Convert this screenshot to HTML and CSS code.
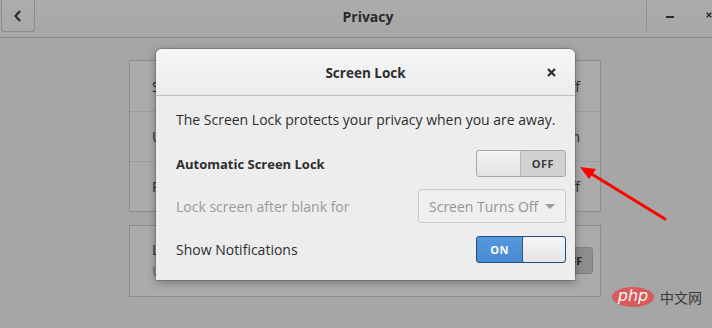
FILE: index.html
```html
<!DOCTYPE html>
<html>
<head>
<meta charset="utf-8">
<link rel="stylesheet" href="styles.css">
</head>
<body>
<div class="window">
  <header class="headerbar">
    <div class="back-btn">
      <svg width="10" height="12" viewBox="0 0 10 12"><path d="M7 1 L2.5 6 L7 11" fill="none" stroke="#2b2b2b" stroke-width="2.2"/></svg>
    </div>
    <div class="hb-title">Privacy</div>
    <div class="hb-controls">
      <span class="hb-sep"></span>
      <span class="hb-min"></span>
      <span class="hb-close">
        <svg width="8" height="8" viewBox="0 0 8 8"><path d="M1 1 L7 7 M7 1 L1 7" stroke="#2b2b2b" stroke-width="2"/></svg>
      </span>
    </div>
  </header>

  <main class="content">
    <section class="panel">
      <div class="prow"><span>Screen Lock</span><span>Off</span></div>
      <div class="prow"><span>Usage &amp; History</span><span>On</span></div>
      <div class="prow"><span>Purge Trash &amp; Temporary Files</span><span>Off</span></div>
    </section>
    <section class="panel panel-two">
      <div class="prow2">
        <div class="p2-text">
          <div>Location Services</div>
          <div class="p2-sub">Uses GPS and Wi-Fi</div>
        </div>
        <div class="bg-switch"><span class="bg-thumb"></span><span class="bg-off">OFF</span></div>
      </div>
    </section>
  </main>

  <div class="dialog">
    <div class="dlg-head">
      <span class="dlg-title">Screen Lock</span>
      <span class="dlg-close">
        <svg width="9" height="9" viewBox="0 0 9 9"><path d="M1 1 L8 8 M8 1 L1 8" stroke="#2e2e2e" stroke-width="2.2"/></svg>
      </span>
    </div>
    <div class="dlg-body">
      <p class="intro">The Screen Lock protects your privacy when you are away.</p>
      <div class="drow r1">
        <span class="lbl bold">Automatic Screen Lock</span>
        <div class="switch off"><span class="thumb"></span><span class="state">OFF</span></div>
      </div>
      <div class="drow r2">
        <span class="lbl dim">Lock screen after blank for</span>
        <div class="combo"><span>Screen Turns Off</span><span class="caret"></span></div>
      </div>
      <div class="drow r3">
        <span class="lbl">Show Notifications</span>
        <div class="switch on"><span class="state">ON</span><span class="thumb"></span></div>
      </div>
    </div>
  </div>

  <svg class="arrow" width="712" height="328" viewBox="0 0 712 328">
    <line x1="665" y1="219" x2="590" y2="173" stroke="#ff0000" stroke-width="3" stroke-linecap="round"/>
    <path d="M580 167 L596 169 L589 179 Z" fill="#ff0000"/>
  </svg>

  <div class="watermark">
    <span class="php">php</span><span class="cn">中文网</span>
  </div>
</div>
</body>
</html>
```

FILE: styles.css
```css
* { box-sizing: border-box; }
html, body { margin: 0; padding: 0; }
body {
  width: 712px;
  height: 328px;
  overflow: hidden;
  background: #a6a6a6;
  font-family: "Open Sans", "DejaVu Sans", sans-serif;
  color: #2b2b2b;
}
.window { position: relative; width: 712px; height: 328px; }

.headerbar {
  height: 38px;
  background: linear-gradient(#ababab, #a7a7a7);
  border-bottom: 1px solid #888;
  display: flex;
  align-items: flex-start;
  position: relative;
}
.back-btn {
  margin-left: 1px;
  width: 34px;
  height: 32px;
  border: 1px solid #8c8c8c;
  border-top: none;
  border-radius: 0 0 3px 3px;
  background: linear-gradient(#adadad, #a8a8a8);
  display: flex;
  align-items: center;
  justify-content: center;
}
.back-btn svg { margin-left: -1px; margin-top: 1px; }
.hb-title {
  flex: 1;
  text-align: center;
  font-weight: 700;
  font-size: 14px;
  line-height: 33px;
  color: #2a2a2a;
  padding-left: 55px;
}
.hb-controls {
  display: flex;
  align-items: center;
  height: 31px;
}
.hb-sep { width: 1px; height: 31px; background: #8f8f8f; margin-right: 19px; }
.hb-min { width: 8px; height: 2px; background: #2b2b2b; margin-top: 3px; margin-right: 32px; }
.hb-close { width: 6px; display: flex; margin-top: -2px; overflow: hidden; }

.content {
  padding: 22px 0 0 129px;
  display: flex;
  flex-direction: column;
  gap: 13px;
}
.panel {
  width: 472px;
  border: 1px solid #8b8b8b;
  background: #ababab;
  font-size: 14px;
}
.prow {
  height: 50px;
  display: flex;
  align-items: center;
  justify-content: space-between;
  padding: 0 20px 0 22px;
  border-top: 1px solid #9d9d9d;
}
.prow:first-child { border-top: none; height: 50px; }
.panel-two { height: 72px; }
.prow2 {
  display: flex;
  align-items: center;
  justify-content: space-between;
  padding: 13px 7px 0 22px;
}
.p2-text { line-height: 21px; }
.p2-sub { color: #707070; }
.bg-switch {
  display: flex;
  width: 80px;
  height: 27px;
  border: 1px solid #7f7f7f;
  border-radius: 3px;
  overflow: hidden;
}
.bg-thumb { flex: 1; background: #b5b5b5; }
.bg-off {
  width: 40px;
  background: #8e8e8e;
  font-weight: 700;
  font-size: 11px;
  display: flex;
  align-items: center;
  justify-content: center;
  color: #222;
}

.dialog {
  position: absolute;
  left: 156px;
  top: 49px;
  width: 419px;
  height: 231px;
  background: #ededed;
  border-radius: 6px 6px 0 0;
  box-shadow: 0 2px 10px rgba(0,0,0,0.35), 0 0 0 1px rgba(0,0,0,0.15);
  overflow: hidden;
}
.dlg-head {
  height: 47px;
  background: linear-gradient(#f6f6f6, #ececec);
  border-bottom: 1px solid #bdbdbd;
  display: flex;
  align-items: center;
  justify-content: center;
  position: relative;
}
.dlg-title { font-weight: 700; font-size: 13.5px; color: #2e2e2e; margin-top: 1px; }
.dlg-close { position: absolute; right: 19px; top: 19px; display: flex; }

.dlg-body {
  padding: 13px 9px 0 20px;
  display: flex;
  flex-direction: column;
}
.intro {
  margin: 0;
  font-size: 14px;
  line-height: 22px;
  color: #2e2e2e;
}
.drow {
  display: flex;
  align-items: center;
  justify-content: space-between;
  font-size: 14px;
  color: #2e2e2e;
}
.r1 { margin-top: 19px; }
.r2 { margin-top: 12px; }
.r3 { margin-top: 13px; }
.bold { font-weight: 700; font-size: 13px; }
.dim { color: #9a9a9a; }

.switch {
  width: 90px;
  height: 27px;
  border-radius: 3px;
  display: flex;
  overflow: hidden;
  font-size: 11px;
  font-weight: 700;
}
.switch.off { border: 1px solid #a9a9a9; background: #d1d1d1; }
.switch.off .thumb {
  width: 44px;
  background: linear-gradient(#f3f3f3, #e3e3e3);
  border-right: 1px solid #b5b5b5;
  border-radius: 2px;
}
.switch.off .state {
  flex: 1;
  display: flex;
  align-items: center;
  justify-content: center;
  color: #3b3b3b;
  letter-spacing: 0.5px;
}
.switch.on { border: 1px solid #1e4e84; background: linear-gradient(#5597dc, #4a8ad2); }
.switch.on .state {
  width: 45px;
  display: flex;
  align-items: center;
  justify-content: center;
  color: #ffffff;
  letter-spacing: 0.5px;
}
.switch.on .thumb {
  flex: 1;
  background: linear-gradient(#f6f6f6, #e4e4e4);
  border-left: 1px solid #2b5a8f;
  border-radius: 2px;
}

.combo {
  width: 148px;
  height: 34px;
  border: 1px solid #cbcbcb;
  border-radius: 3px;
  background: #efefef;
  display: flex;
  align-items: center;
  padding: 0 10px 0 10px;
  justify-content: space-between;
  color: #959595;
  font-size: 14px;
}
.caret {
  width: 0; height: 0;
  border-left: 5px solid transparent;
  border-right: 5px solid transparent;
  border-top: 5px solid #9a9a9a;
}

.arrow { position: absolute; left: 0; top: 0; pointer-events: none; }

.watermark {
  position: absolute;
  left: 612px;
  top: 287px;
  display: flex;
  align-items: center;
  gap: 6px;
}
.php {
  width: 42px;
  height: 20px;
  border-radius: 50%;
  background: #d95a5a;
  color: #f5f5f5;
  font-style: italic;
  font-size: 16px;
  font-family: "DejaVu Sans", sans-serif;
  display: flex;
  align-items: center;
  justify-content: center;
  line-height: 1;
  padding-bottom: 2px;
}
.cn {
  font-family: "Noto Sans CJK SC", sans-serif;
  font-size: 14px;
  color: #3a3a3a;
}
```
